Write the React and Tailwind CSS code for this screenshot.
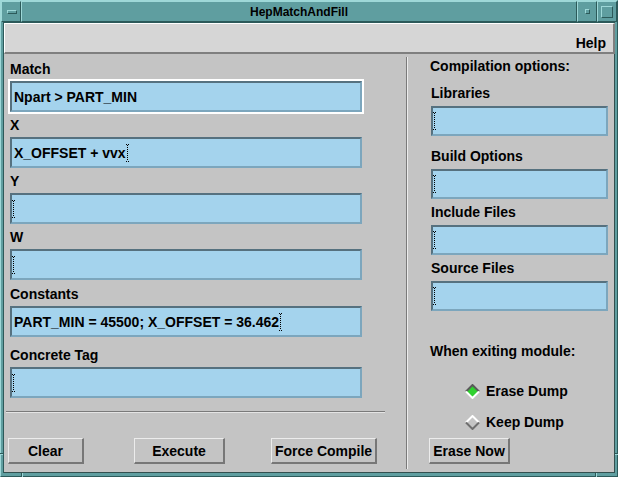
import React from "react";

function Cursor() {
  return (
    <svg width="4" height="18" viewBox="0 0 4 18" className="shrink-0">
      <path d="M0 0.5h4M0 17.5h4" stroke="#000" strokeWidth="1" strokeDasharray="1 1" />
      <path d="M1.5 1v16" stroke="#000" strokeWidth="1" strokeDasharray="1 1" />
    </svg>
  );
}

function LeftField({ text, focused }) {
  return (
    <div
      className={
        focused
          ? "w-[352px] h-[31px] shrink-0 flex items-center bg-[#a4d3ed] border-2 border-t-[#56717f] border-l-[#56717f] border-b-[#7ca6bd] border-r-[#7ca6bd] ring-2 ring-white"
          : "w-[352px] h-[31px] shrink-0 flex items-center bg-[#a4d3ed] border-2 border-t-[#56717f] border-l-[#56717f] border-b-[#7ca6bd] border-r-[#7ca6bd]"
      }
    >
      {text ? (
        <>
          <span className="pl-[2px] whitespace-pre">{text}</span>
          {!focused && <Cursor />}
        </>
      ) : (
        <Cursor />
      )}
    </div>
  );
}

function RightField() {
  return (
    <div className="ml-[2px] w-[177px] h-[30px] shrink-0 flex items-center bg-[#a4d3ed] border-2 border-t-[#56717f] border-l-[#56717f] border-b-[#7ca6bd] border-r-[#7ca6bd]">
      <Cursor />
    </div>
  );
}

function Button({ children, className }) {
  return (
    <div
      className={
        "h-[26px] shrink-0 flex items-center justify-center border-t border-l border-t-[#ececec] border-l-[#ececec] border-b-2 border-r-2 border-b-[#777777] border-r-[#777777] " +
        className
      }
    >
      {children}
    </div>
  );
}

function Diamond({ on }) {
  return (
    <svg width="15" height="15" viewBox="0 0 15 15" className="shrink-0">
      <polygon points="7.5,1 14,7.5 7.5,14 1,7.5" fill={on ? "#2fd12f" : "#c4c4c4"} />
      <polyline
        points="1,7.5 7.5,1 14,7.5"
        fill="none"
        stroke={on ? "#5a5a5a" : "#ffffff"}
        strokeWidth="2"
      />
      <polyline
        points="1,7.5 7.5,14 14,7.5"
        fill="none"
        stroke={on ? "#ffffff" : "#6e6e6e"}
        strokeWidth="2"
      />
    </svg>
  );
}

export default function App() {
  return (
    <div className="relative w-[618px] h-[477px] bg-[#5f9ea0] border border-t-[#9ed8d8] border-l-[#9ed8d8] border-b-[#2c5a5a] border-r-[#2c5a5a] flex flex-col font-['Liberation_Sans',Arial,sans-serif] font-bold text-black text-[14px] leading-[16px] select-none">
      {/* title bar */}
      <div className="flex h-[21px] shrink-0">
        <div className="w-[20px] flex items-center justify-center border border-t-[#9ed8d8] border-l-[#9ed8d8] border-b-[#2c5a5a] border-r-[#2c5a5a]">
          <div className="ml-[2px] w-[10px] h-[4px] border border-t-[#9ed8d8] border-l-[#9ed8d8] border-b-[#2c5a5a] border-r-[#2c5a5a]" />
        </div>
        <div className="flex-1 flex items-center justify-center text-[12px] leading-[14px] border border-t-[#9ed8d8] border-l-[#9ed8d8] border-b-[#2c5a5a] border-r-[#2c5a5a]">
          HepMatchAndFill
        </div>
        <div className="w-[20px] flex items-center justify-center border border-t-[#9ed8d8] border-l-[#9ed8d8] border-b-[#2c5a5a] border-r-[#2c5a5a]">
          <div className="w-[5px] h-[5px] border border-t-[#9ed8d8] border-l-[#9ed8d8] border-b-[#2c5a5a] border-r-[#2c5a5a]" />
        </div>
        <div className="w-[20px] flex items-center justify-center border border-t-[#9ed8d8] border-l-[#9ed8d8] border-b-[#2c5a5a] border-r-[#2c5a5a]">
          <div className="w-[12px] h-[12px] border border-t-[#9ed8d8] border-l-[#9ed8d8] border-b-[#2c5a5a] border-r-[#2c5a5a]" />
        </div>
      </div>

      {/* client */}
      <div className="ml-[2px] w-[612px] h-[451px] shrink-0 border-l border-t border-l-[#2c5a5a] border-t-[#2c5a5a] flex flex-col">
        {/* menubar */}
        <div className="h-[31px] shrink-0 bg-[#d6d6d6] border-t border-l border-t-white border-l-white border-b-2 border-r-2 border-b-[#7f7f7f] border-r-[#7f7f7f] flex justify-end pr-[7px] pt-[11px]">
          Help
        </div>

        {/* main */}
        <div className="h-[419px] shrink-0 bg-[#c4c4c4] border-r border-b border-r-[#34504f] border-b-[#34504f] flex">
          {/* left pane */}
          <div className="w-[402px] shrink-0 flex flex-col pl-[6px]">
            <div className="mt-[7px]">Match</div>
            <div className="mt-[4px]">
              <LeftField text="Npart > PART_MIN" focused />
            </div>
            <div className="mt-[5px]">X</div>
            <div className="mt-[4px]">
              <LeftField text="X_OFFSET + vvx" />
            </div>
            <div className="mt-[5px]">Y</div>
            <div className="mt-[4px]">
              <LeftField />
            </div>
            <div className="mt-[5px]">W</div>
            <div className="mt-[4px]">
              <LeftField />
            </div>
            <div className="mt-[6px]">Constants</div>
            <div className="mt-[4px]">
              <LeftField text="PART_MIN = 45500; X_OFFSET = 36.462" />
            </div>
            <div className="mt-[10px]">Concrete Tag</div>
            <div className="mt-[4px]">
              <LeftField />
            </div>
            <div className="mt-[13px] -ml-[4px] w-[379px] h-[2px] border-t border-b border-t-[#7a7a7a] border-b-[#e4e4e4]" />
            <div className="mt-[25px] -ml-[2px] flex">
              <Button className="w-[76px]">Clear</Button>
              <Button className="ml-[50px] w-[91px]">Execute</Button>
              <Button className="ml-[46px] w-[106px]">Force Compile</Button>
            </div>
          </div>

          {/* vertical separator */}
          <div className="w-[2px] shrink-0 my-[3px] border-l border-r border-l-[#7a7a7a] border-r-[#ececec]" />

          {/* right pane */}
          <div className="flex-1 flex flex-col pl-[21px]">
            <div className="mt-[4px] ml-[1px]">Compilation options:</div>
            <div className="mt-[11px] ml-[2px]">Libraries</div>
            <div className="mt-[5px]">
              <RightField />
            </div>
            <div className="mt-[12px] ml-[2px]">Build Options</div>
            <div className="mt-[5px]">
              <RightField />
            </div>
            <div className="mt-[5px] ml-[2px]">Include Files</div>
            <div className="mt-[5px]">
              <RightField />
            </div>
            <div className="mt-[5px] ml-[2px]">Source Files</div>
            <div className="mt-[5px]">
              <RightField />
            </div>
            <div className="mt-[32px] ml-[1px]">When exiting module:</div>
            <div className="mt-[24px] ml-[36px] flex items-center gap-[6px] h-[16px]">
              <Diamond on />
              <span>Erase Dump</span>
            </div>
            <div className="mt-[15px] ml-[36px] flex items-center gap-[6px] h-[16px]">
              <Diamond />
              <span>Keep Dump</span>
            </div>
            <div className="mt-[8px] flex">
              <Button className="w-[81px]">Erase Now</Button>
            </div>
          </div>
        </div>
      </div>

      {/* frame resize notches */}
      <div className="absolute left-[-1px] top-[452px] w-[3px] h-[2px] border-t border-b border-t-[#2c5a5a] border-b-[#9ed8d8]" />
      <div className="absolute right-[-1px] top-[452px] w-[3px] h-[2px] border-t border-b border-t-[#2c5a5a] border-b-[#9ed8d8]" />
      <div className="absolute left-[20px] bottom-[-1px] w-[2px] h-[4px] border-l border-r border-l-[#2c5a5a] border-r-[#9ed8d8]" />
      <div className="absolute left-[594px] bottom-[-1px] w-[2px] h-[4px] border-l border-r border-l-[#2c5a5a] border-r-[#9ed8d8]" />
    </div>
  );
}
